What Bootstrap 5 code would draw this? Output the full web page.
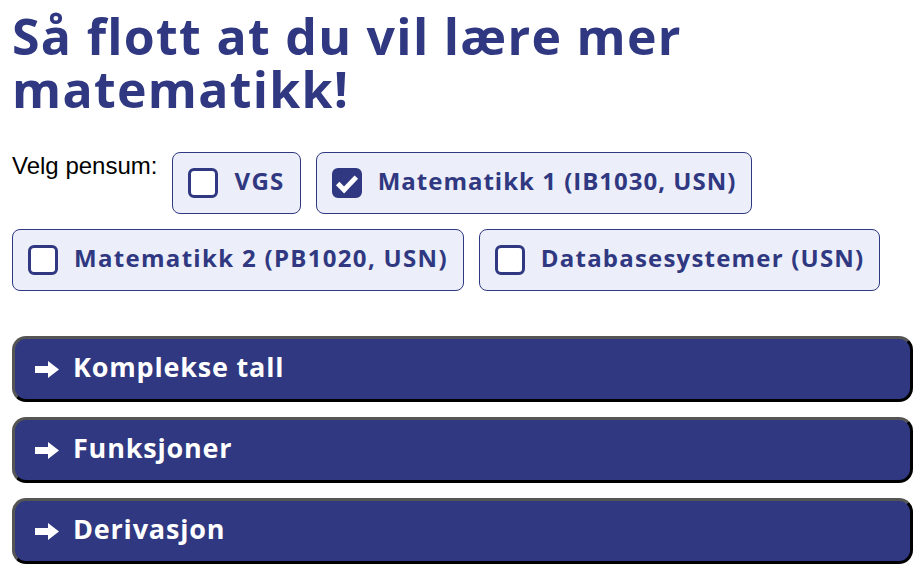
<!doctype html>
<html lang="no">
<head>
<meta charset="utf-8">
<title>Matematikk</title>
<link href="https://cdn.jsdelivr.net/npm/bootstrap@5.3.0/dist/css/bootstrap.min.css" rel="stylesheet">
<style>
body{margin:0;background:#fff;overflow:hidden}
.page-wrap{padding:0 3px 0 12px}
.page-title{font-family:"Open Sans",sans-serif;font-weight:700;font-size:50px;letter-spacing:1.3px;line-height:53px;color:#2f3880;margin:10px 0 36px}
.pensum-row{column-gap:15px;row-gap:15px;margin-bottom:45px}
.pensum-label{font-family:"Liberation Sans",sans-serif;font-size:24px;line-height:28px;color:#000}
.chip{display:flex;align-items:center;gap:16px;height:62px;padding:0 15px;background:#eceef9;border:1px solid #2f3880;border-radius:8px;font-family:"Open Sans",sans-serif;font-weight:700;font-size:24px;color:#2f3880;margin:0;white-space:nowrap}
.chip-vgs{letter-spacing:1.34px}
.chip-m1{letter-spacing:1px}
.chip-m2{letter-spacing:1.31px}
.chip-db{letter-spacing:1.2px}
.chip-text{margin-bottom:5px}
.chip .form-check-input{width:30px;height:30px;margin:0;border:3px solid #2f3880;border-radius:6px;float:none;flex:none;background-color:#fff}
.chip .form-check-input:checked{background-color:#2f3880;background-size:28px 28px;background-image:url("data:image/svg+xml,%3Csvg xmlns='http://www.w3.org/2000/svg' viewBox='0 0 24 24'%3E%3Cpath d='M4 12.500l5.500 5.500L20 7' fill='none' stroke='%23fff' stroke-width='4.200'/%3E%3C/svg%3E")}
.topic-list{display:flex;flex-direction:column;gap:15px}
.topic-btn{display:flex;align-items:center;gap:14px;width:100%;height:66px;padding:0 20px;background:#2f3880;border:3px solid;border-color:#555 #000 #000 #555;border-radius:14px;color:#fff;font-family:"Open Sans",sans-serif;font-weight:700;font-size:27px;letter-spacing:.8px;text-align:left}
.topic-btn svg{flex:none}
.topic-text{margin-bottom:4px}
</style>
</head>
<body>
<div class="page-wrap">
  <h1 class="page-title">Så flott at du vil lære mer matematikk!</h1>
  <div class="pensum-row d-flex flex-wrap align-items-start">
    <span class="pensum-label">Velg pensum:</span>
    <label class="chip chip-vgs"><input class="form-check-input" type="checkbox"><span class="chip-text">VGS</span></label>
    <label class="chip chip-m1"><input class="form-check-input" type="checkbox" checked><span class="chip-text">Matematikk 1 (IB1030, USN)</span></label>
    <label class="chip chip-m2"><input class="form-check-input" type="checkbox"><span class="chip-text">Matematikk 2 (PB1020, USN)</span></label>
    <label class="chip chip-db"><input class="form-check-input" type="checkbox"><span class="chip-text">Databasesystemer (USN)</span></label>
  </div>
  <div class="topic-list">
    <button class="topic-btn" type="button"><svg width="24" height="17" viewBox="0 0 24 17"><path fill="#fff" d="M0 5h13V0l11 8.500L13 17v-5H0z"/></svg><span class="topic-text">Komplekse tall</span></button>
    <button class="topic-btn" type="button"><svg width="24" height="17" viewBox="0 0 24 17"><path fill="#fff" d="M0 5h13V0l11 8.500L13 17v-5H0z"/></svg><span class="topic-text">Funksjoner</span></button>
    <button class="topic-btn" type="button"><svg width="24" height="17" viewBox="0 0 24 17"><path fill="#fff" d="M0 5h13V0l11 8.500L13 17v-5H0z"/></svg><span class="topic-text">Derivasjon</span></button>
  </div>
</div>
<script src="https://cdn.jsdelivr.net/npm/bootstrap@5.3.0/dist/js/bootstrap.bundle.min.js"></script>
</body>
</html>
